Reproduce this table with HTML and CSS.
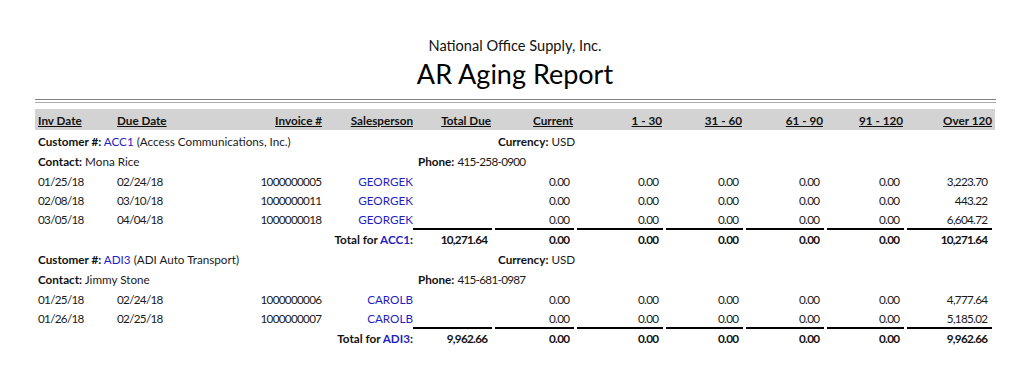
FILE: index.html
```html
<!DOCTYPE html>
<html lang="en">
<head>
<meta charset="utf-8">
<title>AR Aging Report</title>
<link rel="stylesheet" href="styles.css">
</head>
<body>
<div class="report">
  <div class="company">National Office Supply, Inc.</div>
  <h1 class="title">AR Aging Report</h1>
  <div class="rules"></div>

  <div class="row head">
    <div class="c l">Inv Date</div>
    <div class="c l">Due Date</div>
    <div class="c r">Invoice #</div>
    <div class="c r sp">Salesperson</div>
    <div class="c r">Total Due</div>
    <div class="c r">Current</div>
    <div class="c r">1 - 30</div>
    <div class="c r">31 - 60</div>
    <div class="c r">61 - 90</div>
    <div class="c r">91 - 120</div>
    <div class="c r last">Over 120</div>
  </div>

  <div class="row cust">
    <div class="c l span-cust"><b>Customer #:</b> <span class="link">ACC1</span> (Access Communications, Inc.)</div>
    <div class="c l span-cur"><b>Currency:</b> USD</div>
  </div>
  <div class="row contact">
    <div class="c l span-contact"><b>Contact:</b> Mona Rice</div>
    <div class="c l span-phone"><b>Phone:</b> <span class="num">415-258-0900</span></div>
  </div>
  <div class="row line">
    <div class="c l num">01/25/18</div><div class="c l num">02/24/18</div><div class="c r num">1000000005</div><div class="c r sp link">GEORGEK</div>
    <div class="c r n"></div><div class="c r n num">0.00</div><div class="c r n num">0.00</div><div class="c r n num">0.00</div><div class="c r n num">0.00</div><div class="c r n num">0.00</div><div class="c r n num">3,223.70</div>
  </div>
  <div class="row line">
    <div class="c l num">02/08/18</div><div class="c l num">03/10/18</div><div class="c r num">1000000011</div><div class="c r sp link">GEORGEK</div>
    <div class="c r n"></div><div class="c r n num">0.00</div><div class="c r n num">0.00</div><div class="c r n num">0.00</div><div class="c r n num">0.00</div><div class="c r n num">0.00</div><div class="c r n num">443.22</div>
  </div>
  <div class="row line">
    <div class="c l num">03/05/18</div><div class="c l num">04/04/18</div><div class="c r num">1000000018</div><div class="c r sp link">GEORGEK</div>
    <div class="c r n"></div><div class="c r n num">0.00</div><div class="c r n num">0.00</div><div class="c r n num">0.00</div><div class="c r n num">0.00</div><div class="c r n num">0.00</div><div class="c r n num">6,604.72</div>
  </div>
  <div class="row total">
    <div class="c r sp span-label"><b>Total for <span class="link">ACC1</span>:</b></div>
    <div class="c r n t num">10,271.64</div><div class="c r n t num">0.00</div><div class="c r n t num">0.00</div><div class="c r n t num">0.00</div><div class="c r n t num">0.00</div><div class="c r n t num">0.00</div><div class="c r n t num">10,271.64</div>
  </div>

  <div class="row cust">
    <div class="c l span-cust"><b>Customer #:</b> <span class="link">ADI3</span> (ADI Auto Transport)</div>
    <div class="c l span-cur"><b>Currency:</b> USD</div>
  </div>
  <div class="row contact">
    <div class="c l span-contact"><b>Contact:</b> Jimmy Stone</div>
    <div class="c l span-phone"><b>Phone:</b> <span class="num">415-681-0987</span></div>
  </div>
  <div class="row line">
    <div class="c l num">01/25/18</div><div class="c l num">02/24/18</div><div class="c r num">1000000006</div><div class="c r sp link">CAROLB</div>
    <div class="c r n"></div><div class="c r n num">0.00</div><div class="c r n num">0.00</div><div class="c r n num">0.00</div><div class="c r n num">0.00</div><div class="c r n num">0.00</div><div class="c r n num">4,777.64</div>
  </div>
  <div class="row line">
    <div class="c l num">01/26/18</div><div class="c l num">02/25/18</div><div class="c r num">1000000007</div><div class="c r sp link">CAROLB</div>
    <div class="c r n"></div><div class="c r n num">0.00</div><div class="c r n num">0.00</div><div class="c r n num">0.00</div><div class="c r n num">0.00</div><div class="c r n num">0.00</div><div class="c r n num">5,185.02</div>
  </div>
  <div class="row total">
    <div class="c r sp span-label"><b>Total for <span class="link">ADI3</span>:</b></div>
    <div class="c r n t num">9,962.66</div><div class="c r n t num">0.00</div><div class="c r n t num">0.00</div><div class="c r n t num">0.00</div><div class="c r n t num">0.00</div><div class="c r n t num">0.00</div><div class="c r n t num">9,962.66</div>
  </div>
</div>
</body>
</html>
```

FILE: styles.css
```css
html, body {
  margin: 0;
  padding: 0;
  background: #ffffff;
}

body {
  font-family: Lato, "Open Sans", "Liberation Sans", sans-serif;
  color: #1a1a1a;
  font-size: 11.7px;
}

.report {
  width: 960px;
  margin-left: 35px;
}

.company {
  margin-top: 36px;
  text-align: center;
  font-size: 14.6px;
  line-height: 20px;
  color: #111;
}

.title {
  margin: 0;
  text-align: center;
  font-size: 27px;
  font-weight: 400;
  line-height: 36px;
  color: #000;
}

.rules {
  width: 961px;
  margin-top: 7px;
  height: 2px;
  border-top: 1px solid #7f7f7f;
  border-bottom: 1px solid #ababab;
  margin-bottom: 6px;
}

.row {
  display: grid;
  grid-template-columns: 79px 126px 86px 87px 82px 82px 89px 80px 81px 80px 88px;
  align-items: center;
}

.c {
  white-space: nowrap;
  overflow: visible;
}

.num { letter-spacing: -0.7px; }

.l { text-align: left; padding-left: 3px; }
.r { text-align: right; padding-right: 4px; }
.r.sp { padding-right: 0; }
.r.num { padding-right: 4.7px; }

.head {
  background: #d3d3d3;
  height: 21px;
  font-weight: 700;
  color: #111;
}
.head .c { text-decoration: underline; }
.head .last { padding-right: 3px; }

.link { color: #1f1fbf; }

b { font-weight: 700; color: #111; }

.cust { height: 21px; }
.contact { height: 20px; }
.line { height: 19px; }

.span-cust { grid-column: 1 / 6; }
.span-cur { grid-column: 6 / 12; }
.span-contact { grid-column: 1 / 5; }
.span-phone { grid-column: 5 / 12; padding-left: 5px; }
.span-label { grid-column: 1 / 5; }

.n { margin-right: 3px; }

.total {
  align-items: stretch;
}
.total .c {
  height: 18px;
  line-height: 18px;
}
.total .t {
  border-top: 2px solid #000;
  font-weight: 700;
  color: #111;
}
.total .span-label {
  margin-top: 2px;
}
```
